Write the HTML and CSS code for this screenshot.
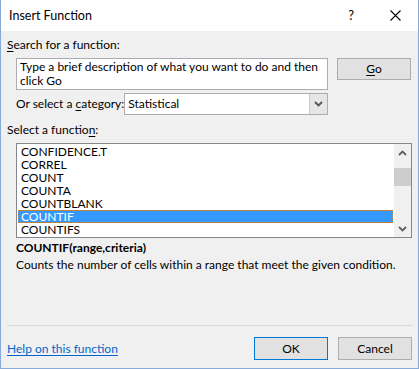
FILE: index.html
```html
<!DOCTYPE html>
<html lang="en">
<head>
    <meta charset="UTF-8">
    <title>Insert Function</title>
    <link rel="stylesheet" href="styles.css">
</head>
<body>
    <!-- Fenêtre de dialogue -->
    <div class="window">
        <div class="titlebar">
            <span class="title">Insert Function</span>
            <span class="help">?</span>
            <svg class="close" width="11" height="11" viewBox="0 0 11 11">
                <path d="M0.5 0.5 L10.5 10.5 M10.5 0.5 L0.5 10.5" stroke="#000" stroke-width="1.1" fill="none"/>
            </svg>
        </div>

        <div class="content">
            <div class="label search-label"><u>S</u>earch for a function:</div>
            <div class="search-row">
                <div class="search-box">Type a brief description of what you want to do and then<br>click Go</div>
                <div class="button go"><u>G</u>o</div>
            </div>

            <div class="category-row">
                <span class="label">Or select a <u>c</u>ategory:</span>
                <div class="select">
                    <span class="select-value">Statistical</span>
                    <span class="select-arrow">
                        <svg width="9" height="6" viewBox="0 0 9 6"><path d="M1 1 L4.5 4.5 L8 1" stroke="#555" stroke-width="1.8" fill="none"/></svg>
                    </span>
                </div>
            </div>

            <div class="label list-label">Select a functio<u>n</u>:</div>
            <div class="listbox">
                <ul class="items">
                    <li>CONFIDENCE.T</li>
                    <li>CORREL</li>
                    <li>COUNT</li>
                    <li>COUNTA</li>
                    <li>COUNTBLANK</li>
                    <li class="selected">COUNTIF</li>
                    <li>COUNTIFS</li>
                </ul>
                <div class="scrollbar">
                    <div class="scroll-button">
                        <svg width="9" height="6" viewBox="0 0 9 6"><path d="M1 5 L4.5 1.5 L8 5" stroke="#606060" stroke-width="1.8" fill="none"/></svg>
                    </div>
                    <div class="scroll-track">
                        <div class="scroll-thumb"></div>
                    </div>
                    <div class="scroll-button">
                        <svg width="9" height="6" viewBox="0 0 9 6"><path d="M1 1 L4.5 4.5 L8 1" stroke="#606060" stroke-width="1.8" fill="none"/></svg>
                    </div>
                </div>
            </div>

            <div class="signature">COUNTIF(range,criteria)</div>
            <div class="description">Counts the number of cells within a range that meet the given condition.</div>
        </div>

        <div class="footer">
            <div class="separator"></div>
            <div class="footer-row">
                <a class="help-link" href="#">Help on this function</a>
                <div class="buttons">
                    <div class="button ok">OK</div>
                    <div class="button">Cancel</div>
                </div>
            </div>
        </div>
    </div>
</body>
</html>
```

FILE: styles.css
```css
/* Réinitialisation */
body, html {
    margin: 0;
    padding: 0;
    background: #f0f0f0;
    font-family: Lato, "Noto Sans", sans-serif;
    font-size: 12px;
    color: #000;
}

u {
    text-decoration: underline;
    text-underline-offset: 2px;
}

/* Fenêtre */
.window {
    width: 419px;
    height: 369px;
    box-sizing: border-box;
    border: 1px solid #88aad8;
    border-top: none;
    background: #f0f0f0;
    display: flex;
    flex-direction: column;
    white-space: nowrap;
}

.titlebar {
    height: 31px;
    background: #fff;
    display: flex;
    align-items: center;
    padding-left: 8px;
    flex-shrink: 0;
}

.title {
    flex: 1;
    font-size: 12.5px;
    padding-bottom: 1px;
}

.help {
    font-size: 13px;
    margin-right: 36px;
    padding-bottom: 2px;
}

.close {
    margin-right: 17px;
    margin-bottom: 1px;
}

/* Contenu */
.content {
    padding: 0 6px;
}

.label {
    line-height: 16px;
}

.search-label {
    margin-top: 6px;
}

.search-row {
    display: flex;
    align-items: flex-start;
    margin-top: 5px;
    margin-left: 9px;
}

.search-box {
    width: 312px;
    height: 32px;
    box-sizing: border-box;
    border: 1px solid #abadb3;
    background: #fff;
    padding: 1px 3px 0 3px;
    line-height: 14px;
}

.button {
    width: 74px;
    height: 23px;
    box-sizing: border-box;
    border: 1px solid #adadad;
    background: #e1e1e1;
    display: flex;
    align-items: center;
    justify-content: center;
    padding-bottom: 1px;
}

.go {
    height: 22px;
    margin-left: 9px;
}

.category-row {
    display: flex;
    align-items: center;
    width: 312px;
    margin-top: 3px;
    margin-left: 9px;
}

.select {
    margin-left: auto;
    width: 205px;
    height: 22px;
    box-sizing: border-box;
    border: 1px solid #abadb3;
    background: #fff;
    display: flex;
}

.select-value {
    flex: 1;
    padding-left: 3px;
    line-height: 19px;
}

.select-arrow {
    width: 17px;
    background: #e6e6e6;
    border-left: 1px solid #c8c8c8;
    display: flex;
    align-items: center;
    justify-content: center;
}

.list-label {
    margin-top: 7px;
}

/* Liste des fonctions */
.listbox {
    margin-top: 5px;
    margin-left: 9px;
    width: 396px;
    height: 95px;
    box-sizing: border-box;
    border: 1px solid #828790;
    background: #fff;
    display: flex;
}

.items {
    list-style: none;
    margin: 0;
    padding: 1px;
    flex: 1;
}

.items li {
    height: 13px;
    line-height: 13px;
    padding-left: 3px;
}

.items li.selected {
    background: #3399ff;
    color: #fff;
    outline: 1px dotted #c7863e;
    outline-offset: -1px;
}

.scrollbar {
    width: 17px;
    background: #f0f0f0;
    display: flex;
    flex-direction: column;
}

.scroll-button {
    height: 17px;
    display: flex;
    align-items: center;
    justify-content: center;
}

.scroll-track {
    flex: 1;
    padding-top: 7px;
}

.scroll-thumb {
    height: 18px;
    background: #cdcdcd;
}

.signature {
    margin-top: 2px;
    margin-left: 9px;
    font-weight: bold;
    line-height: 16px;
}

.description {
    margin-left: 9px;
    line-height: 16px;
    margin-top: 1px;
}

/* Pied de la fenêtre */
.footer {
    margin-top: auto;
    padding: 0 5px 8px 6px;
}

.separator {
    height: 1px;
    background: #dadada;
}

.footer-row {
    display: flex;
    align-items: center;
    margin-top: 11px;
}

.help-link {
    flex: 1;
    color: #0066cc;
    text-decoration: underline;
    text-underline-offset: 2px;
}

.buttons {
    display: flex;
    gap: 10px;
    margin-right: 1px;
}

.ok {
    border-color: #0078d7;
}
```
